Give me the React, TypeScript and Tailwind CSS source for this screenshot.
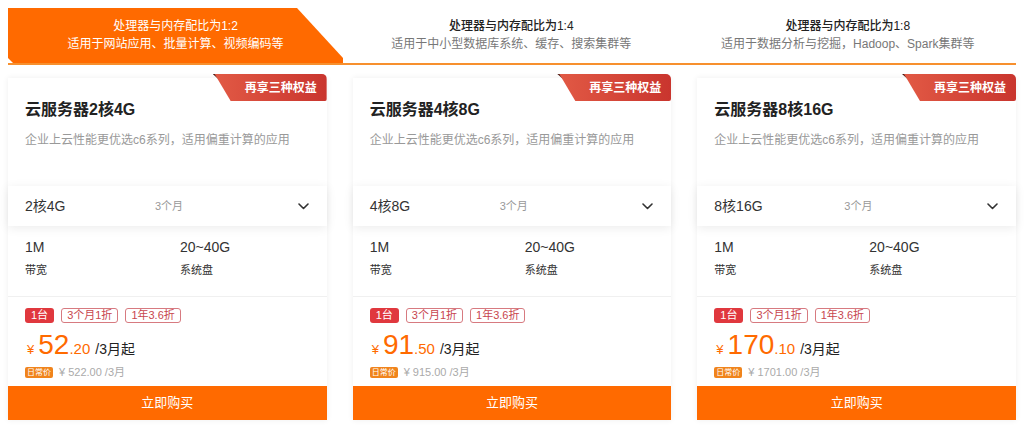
import React from "react";

const tabs = [
  { title: "处理器与内存配比为1:2", sub: "适用于网站应用、批量计算、视频编码等" },
  { title: "处理器与内存配比为1:4", sub: "适用于中小型数据库系统、缓存、搜索集群等" },
  { title: "处理器与内存配比为1:8", sub: "适用于数据分析与挖掘，Hadoop、Spark集群等" },
];

const cards = [
  { name: "云服务器2核4G", spec: "2核4G", int: "52", dec: ".20", orig: "¥ 522.00 /3月" },
  { name: "云服务器4核8G", spec: "4核8G", int: "91", dec: ".50", orig: "¥ 915.00 /3月" },
  { name: "云服务器8核16G", spec: "8核16G", int: "170", dec: ".10", orig: "¥ 1701.00 /3月" },
];

function Chevron() {
  return (
    <svg width="11" height="7" viewBox="0 0 11 7" fill="none">
      <path d="M1 1L5.5 5.5L10 1" stroke="#333" strokeWidth="1.6" strokeLinecap="round" strokeLinejoin="round" />
    </svg>
  );
}

function Ribbon() {
  return (
    <div className="absolute right-0 top-[-4px] h-[27px] w-[114px]">
      <div className="absolute left-0 top-0 h-[7px] w-[8px] bg-[#4a1a12] [clip-path:polygon(0_0,100%_0,100%_100%)]" />
      <div className="absolute inset-0 flex items-center justify-end rounded-tr-[5px] rounded-br-[2px] bg-[linear-gradient(90deg,#e25a45,#c9352e)] pr-[10px] [clip-path:polygon(2px_0,100%_0,100%_100%,18px_100%)]">
        <span className="text-[12px] font-bold leading-none text-white">再享三种权益</span>
      </div>
    </div>
  );
}

function Card({ c }: { c: (typeof cards)[number] }) {
  return (
    <div className="relative flex flex-col bg-white shadow-[0_0_6px_rgba(0,0,0,0.07)]">
      <Ribbon />
      <div className="h-[108px] px-[17px] pt-[22px]">
        <div className="text-[16px] font-semibold leading-[20px] text-[#222]">{c.name}</div>
        <div className="mt-[11px] text-[12px] leading-[18px] text-[#999]">企业上云性能更优选c6系列，适用偏重计算的应用</div>
      </div>
      <div className="flex h-[40px] items-center bg-white pl-[17px] pr-[18px] shadow-[0_2px_10px_rgba(0,0,0,0.08)]">
        <div className="w-[130px] text-[14px] text-[#333]">{c.spec}</div>
        <div className="flex-1 text-[11px] text-[#999]">3个月</div>
        <Chevron />
      </div>
      <div className="flex border-b border-[#f0f0f0] pb-[18px] pl-[17px] pt-[11px]">
        <div className="w-[155px]">
          <div className="text-[14px] leading-[20px] text-[#333]">1M</div>
          <div className="mt-[5px] text-[11px] leading-[16px] text-[#333]">带宽</div>
        </div>
        <div>
          <div className="text-[14px] leading-[20px] text-[#333]">20~40G</div>
          <div className="mt-[5px] text-[11px] leading-[16px] text-[#333]">系统盘</div>
        </div>
      </div>
      <div className="px-[17px] pt-[11px]">
        <div className="flex gap-[7px]">
          <span className="flex h-[15px] items-center rounded-[3px] bg-[#e0383e] px-[6px] text-[11px] leading-none text-white">1台</span>
          <span className="flex h-[15px] items-center rounded-[3px] border border-[#d77a80] px-[5px] text-[11px] leading-none text-[#c8464e]">3个月1折</span>
          <span className="flex h-[15px] items-center rounded-[3px] border border-[#d77a80] px-[5px] text-[11px] leading-none text-[#c8464e]">1年3.6折</span>
        </div>
        <div className="mt-[8px] flex h-[28px] items-baseline text-[#ff6a00]">
          <span className="ml-[2px] mr-[4px] text-[13px]">¥</span>
          <span className="text-[28px] leading-[28px]">{c.int}</span>
          <span className="text-[15px]">{c.dec}</span>
          <span className="ml-[5px] text-[14px] text-[#222]">/3月起</span>
        </div>
        <div className="mt-[8px] flex items-center gap-[6px]">
          <span className="flex h-[11px] items-center rounded-[2px] bg-[#f0841c] px-[2px] text-[8px] leading-none text-white">日常价</span>
          <span className="text-[11px] leading-none text-[#aaa]">{c.orig}</span>
        </div>
      </div>
      <button className="mt-[8px] flex h-[34px] items-center justify-center bg-[#ff6a00] text-[13px] text-white">立即购买</button>
    </div>
  );
}

export default function App() {
  return (
    <div className="h-[428px] w-[1024px] bg-white px-2 pt-2 font-['Liberation_Sans','Noto_Sans_CJK_SC',sans-serif]">
      <div className="grid h-[55px] grid-cols-[335px_1fr_1fr]">
        {tabs.map((t, i) => (
          <div
            key={i}
            className={
              i === 0
                ? "flex flex-col items-center justify-center bg-[#ff6a00] pb-[2px] [clip-path:polygon(0_0,289px_0,335px_50px,335px_100%,5px_100%,0_50px)]"
                : "flex flex-col items-center justify-center pb-[2px]"
            }
          >
            <div className={i === 0 ? "text-[12px] leading-[18px] text-white" : "text-[12px] font-medium leading-[18px] text-[#222]"}>{t.title}</div>
            <div className={i === 0 ? "text-[12px] leading-[18px] text-white" : "text-[12px] leading-[18px] text-[#777]"}>{t.sub}</div>
          </div>
        ))}
      </div>
      <div className="h-[2px] bg-[#f7902e]" />
      <div className="mt-[13px] grid grid-cols-3 gap-[26px]">
        {cards.map((c, i) => (
          <Card key={i} c={c} />
        ))}
      </div>
    </div>
  );
}
